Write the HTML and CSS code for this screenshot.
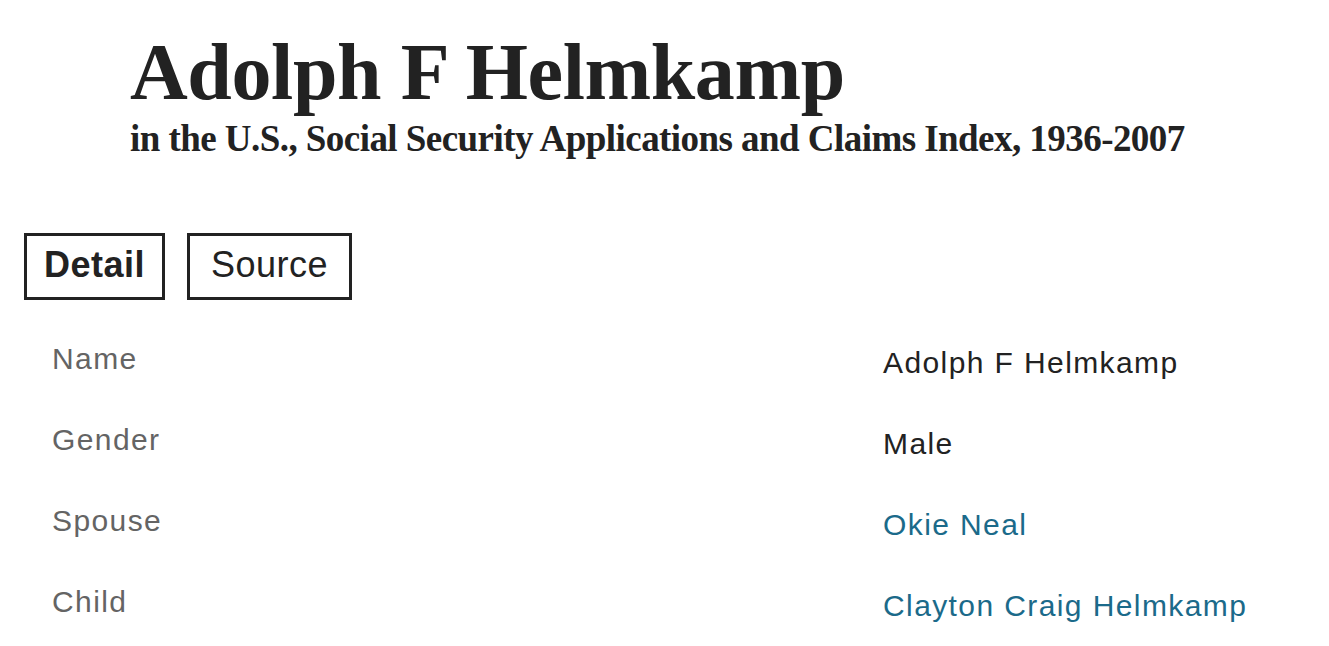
FILE: index.html
```html
<!DOCTYPE html>
<html>
<head>
<meta charset="utf-8">
<link rel="stylesheet" href="styles.css">
</head>
<body>
<header class="hero">
  <h1 class="title">Adolph F Helmkamp</h1>
  <p class="subtitle">in the U.S., Social Security Applications and Claims Index, 1936-2007</p>
</header>
<nav class="tabs">
  <button class="tab tab-active">Detail</button>
  <button class="tab tab-source">Source</button>
</nav>
<dl class="facts">
  <div class="row"><dt>Name</dt><dd>Adolph F Helmkamp</dd></div>
  <div class="row"><dt>Gender</dt><dd>Male</dd></div>
  <div class="row"><dt>Spouse</dt><dd><a href="#">Okie Neal</a></dd></div>
  <div class="row"><dt>Child</dt><dd><a href="#">Clayton Craig Helmkamp</a></dd></div>
</dl>
</body>
</html>
```
FILE: styles.css
```css
html, body {
  margin: 0;
  padding: 0;
  background: #fff;
}
body {
  font-family: "Liberation Sans", Arial, sans-serif;
  color: #222;
}
.hero {
  padding: 27px 0 0 130px;
}
.title {
  font-family: "Liberation Serif", "Times New Roman", serif;
  font-weight: bold;
  font-size: 80px;
  line-height: 90px;
  margin: 0;
  color: #222;
  letter-spacing: -0.4px;
}
.subtitle {
  font-family: "Liberation Serif", "Times New Roman", serif;
  font-weight: bold;
  font-size: 37px;
  line-height: 40px;
  margin: 2px 0 0 0;
  color: #222;
  letter-spacing: -0.55px;
}
.tabs {
  display: flex;
  gap: 22px;
  padding: 74px 0 0 24px;
}
.tab {
  font-family: "Liberation Sans", Arial, sans-serif;
  font-size: 36px;
  letter-spacing: 0.5px;
  color: #222;
  background: #fff;
  border: 3px solid #222;
  border-radius: 0;
  height: 67px;
  padding: 0 17px 3px;
  margin: 0;
}
.tab-active {
  font-weight: bold;
}
.tab-source {
  padding: 0 21px 3px;
}
.facts {
  margin: 41px 0 0 0;
  padding: 0 0 0 52px;
}
.row {
  display: grid;
  grid-template-columns: 831px 1fr;
  height: 81px;
}
.row dt {
  margin: 0;
  font-size: 30px;
  line-height: 36px;
  letter-spacing: 1.4px;
  color: #646464;
}
.row dd {
  margin: 0;
  font-size: 30px;
  line-height: 36px;
  letter-spacing: 1.4px;
  color: #222;
  padding-top: 4px;
}
.row a {
  color: #1b6a8a;
  text-decoration: none;
}
```
